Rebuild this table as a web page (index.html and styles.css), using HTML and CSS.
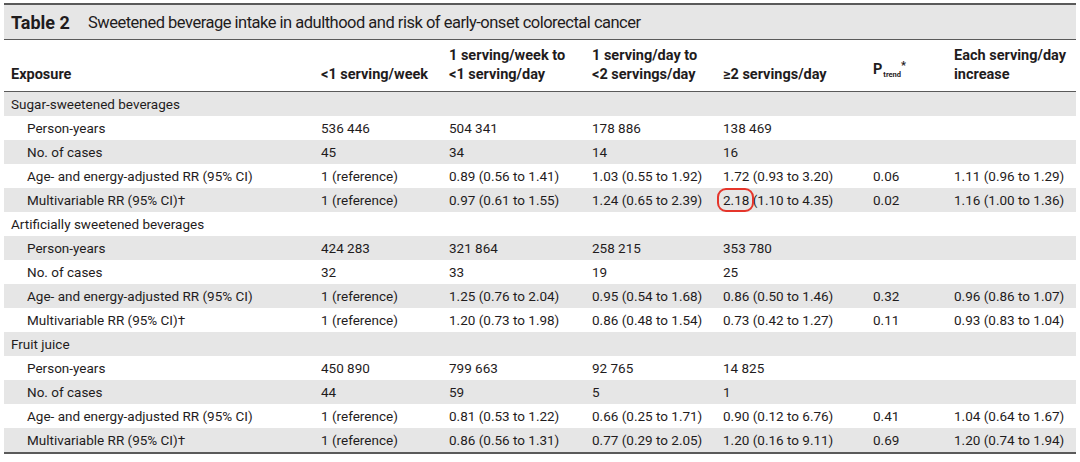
FILE: index.html
```html
<!DOCTYPE html>
<html>
<head>
<meta charset="utf-8">
<link rel="stylesheet" href="styles.css">
</head>
<body>
<div class="wrap">
  <div class="title"><span class="tnum">Table 2</span><span class="ttext">Sweetened beverage intake in adulthood and risk of early-onset colorectal cancer</span></div>
  <table class="tbl">
    <colgroup>
      <col class="c1"><col class="c2"><col class="c3"><col class="c4"><col class="c5"><col class="c6"><col class="c7">
    </colgroup>
    <thead>
      <tr>
        <th>Exposure</th>
        <th>&lt;1 serving/week</th>
        <th>1 serving/week to<br>&lt;1 serving/day</th>
        <th>1 serving/day to<br>&lt;2 servings/day</th>
        <th>≥2 servings/day</th>
        <th>P<sub>trend</sub><sup>*</sup></th>
        <th>Each serving/day<br>increase</th>
      </tr>
    </thead>
    <tbody>
      <tr><td class="grp" colspan="7">Sugar-sweetened beverages</td></tr>
      <tr><td class="sub">Person-years</td><td>536 446</td><td>504 341</td><td>178 886</td><td>138 469</td><td></td><td></td></tr>
      <tr><td class="sub">No. of cases</td><td>45</td><td>34</td><td>14</td><td>16</td><td></td><td></td></tr>
      <tr><td class="sub">Age- and energy-adjusted RR (95% CI)</td><td>1 (reference)</td><td>0.89 (0.56 to 1.41)</td><td>1.03 (0.55 to 1.92)</td><td>1.72 (0.93 to 3.20)</td><td>0.06</td><td>1.11 (0.96 to 1.29)</td></tr>
      <tr><td class="sub">Multivariable RR (95% CI)†</td><td>1 (reference)</td><td>0.97 (0.61 to 1.55)</td><td>1.24 (0.65 to 2.39)</td><td><span class="mark">2.18</span> (1.10 to 4.35)</td><td>0.02</td><td>1.16 (1.00 to 1.36)</td></tr>
      <tr><td class="grp" colspan="7">Artificially sweetened beverages</td></tr>
      <tr><td class="sub">Person-years</td><td>424 283</td><td>321 864</td><td>258 215</td><td>353 780</td><td></td><td></td></tr>
      <tr><td class="sub">No. of cases</td><td>32</td><td>33</td><td>19</td><td>25</td><td></td><td></td></tr>
      <tr><td class="sub">Age- and energy-adjusted RR (95% CI)</td><td>1 (reference)</td><td>1.25 (0.76 to 2.04)</td><td>0.95 (0.54 to 1.68)</td><td>0.86 (0.50 to 1.46)</td><td>0.32</td><td>0.96 (0.86 to 1.07)</td></tr>
      <tr><td class="sub">Multivariable RR (95% CI)†</td><td>1 (reference)</td><td>1.20 (0.73 to 1.98)</td><td>0.86 (0.48 to 1.54)</td><td>0.73 (0.42 to 1.27)</td><td>0.11</td><td>0.93 (0.83 to 1.04)</td></tr>
      <tr><td class="grp" colspan="7">Fruit juice</td></tr>
      <tr><td class="sub">Person-years</td><td>450 890</td><td>799 663</td><td>92 765</td><td>14 825</td><td></td><td></td></tr>
      <tr><td class="sub">No. of cases</td><td>44</td><td>59</td><td>5</td><td>1</td><td></td><td></td></tr>
      <tr><td class="sub">Age- and energy-adjusted RR (95% CI)</td><td>1 (reference)</td><td>0.81 (0.53 to 1.22)</td><td>0.66 (0.25 to 1.71)</td><td>0.90 (0.12 to 6.76)</td><td>0.41</td><td>1.04 (0.64 to 1.67)</td></tr>
      <tr><td class="sub">Multivariable RR (95% CI)†</td><td>1 (reference)</td><td>0.86 (0.56 to 1.31)</td><td>0.77 (0.29 to 2.05)</td><td>1.20 (0.16 to 9.11)</td><td>0.69</td><td>1.20 (0.74 to 1.94)</td></tr>
    </tbody>
  </table>
</div>
</body>
</html>
```
FILE: styles.css
```css
html, body {
  margin: 0;
  padding: 0;
  background: #ffffff;
}
body {
  font-family: Roboto, "Liberation Sans", sans-serif;
  color: #1f1c1d;
}
.wrap {
  padding: 3px 4px 0 4px;
  width: 1072px;
}
.title {
  border-top: 2px solid #5a5a5a;
  border-bottom: 1px solid #5a5a5a;
  background: #e6e6e6;
  height: 34px;
  display: flex;
  align-items: center;
  padding-left: 7px;
  box-sizing: content-box;
}
.tnum {
  font-weight: 700;
  font-size: 18px;
  width: 77px;
}
.ttext {
  font-weight: 400;
  font-size: 16.5px;
  letter-spacing: -0.5px;
}
.tbl {
  width: 1072px;
  border-collapse: collapse;
  table-layout: fixed;
  font-size: 13.5px;
  border-bottom: 2px solid #5a5a5a;
}
.c1 { width: 310px; }
.c2 { width: 128px; }
.c3 { width: 143px; }
.c4 { width: 131px; }
.c5 { width: 150px; }
.c6 { width: 81px; }
.c7 { width: 129px; }
thead th {
  text-align: left;
  vertical-align: bottom;
  font-weight: 700;
  font-size: 14.5px;
  line-height: 19px;
  height: 51px;
  padding: 0 0 7px 7px;
  box-sizing: border-box;
  border-bottom: 1px solid #5a5a5a;
  white-space: nowrap;
}
thead th sub {
  font-size: 7.5px;
  vertical-align: -3px;
  margin-left: 1px;
}
thead th sup {
  font-size: 11px;
  vertical-align: 5px;
}
tbody td {
  height: 24px;
  padding: 0 0 0 7px;
  line-height: 24px;
  white-space: nowrap;
  vertical-align: middle;
}
tbody tr:nth-child(odd) {
  background: #e6e6e6;
}
tbody td.sub {
  padding-left: 23px;
}
.mark {
  position: relative;
}
.mark::after {
  content: "";
  position: absolute;
  left: -6px;
  right: -5px;
  top: -4px;
  bottom: -4px;
  border: 2px solid #e5352b;
  border-radius: 9px;
}
```
